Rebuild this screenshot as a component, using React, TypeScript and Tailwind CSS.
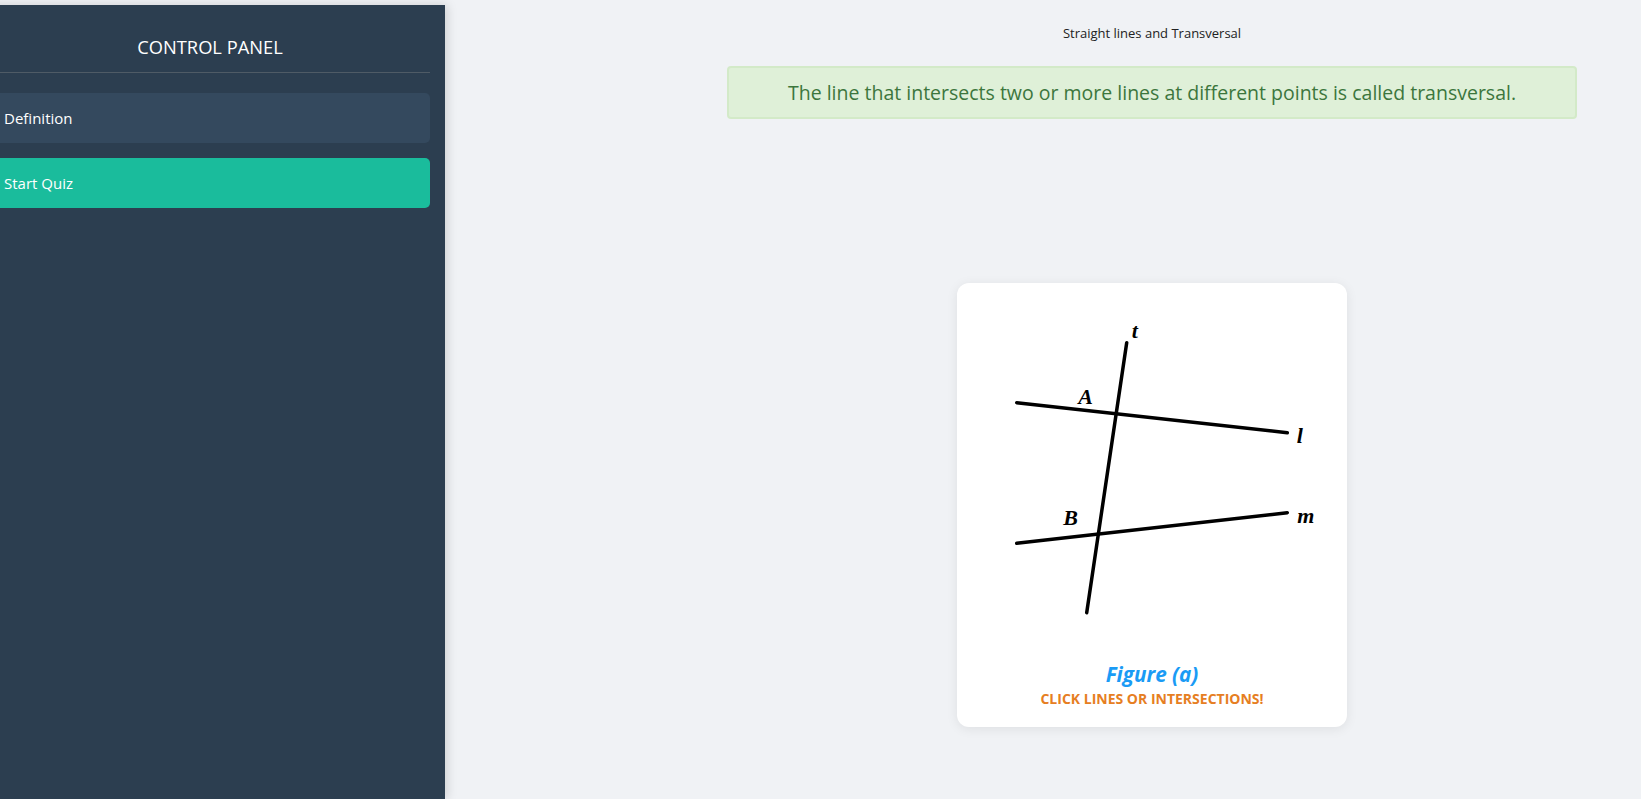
import React from "react";

export default function App() {
  const font = { fontFamily: '"Open Sans", "Noto Sans", sans-serif' };
  return (
    <div className="flex h-[799px] w-full overflow-hidden bg-[#f0f2f5]" style={font}>
      <aside className="mt-[5px] ml-[-25px] flex h-[794px] w-[470px] shrink-0 flex-col bg-[#2c3e50] px-[15px] shadow-[2px_0_10px_rgba(0,0,0,0.15)]">
        <div className="flex h-[68px] items-center justify-center border-b border-[#4f5b66] pt-[17px] text-[18.3px] text-white">
          CONTROL PANEL
        </div>
        <button className="mt-[20px] flex h-[50px] w-full items-center rounded-[5px] bg-[#34495e] px-[14px] text-left text-[15px] text-white">
          Definition
        </button>
        <button className="mt-[15px] flex h-[50px] w-full items-center rounded-[5px] bg-[#1abc9c] px-[14px] text-left text-[15px] text-white">
          Start Quiz
        </button>
      </aside>
      <main className="flex-1">
        <div className="ml-[282px] flex w-[850px] flex-col items-center">
          <div className="mt-[24px] h-[18px] text-[13px] leading-[18px] text-[#222]">Straight lines and Transversal</div>
          <div className="mt-[24px] flex h-[53px] w-[850px] items-center justify-center rounded-[4px] border-2 border-[#d3eac8] bg-[#dff0d8] text-[19.5px] text-[#3c763d]">
            The line that intersects two or more lines at different points is called transversal.
          </div>
          <div className="mt-[164px] flex h-[444px] w-[390px] flex-col items-center rounded-xl bg-white shadow-[0_2px_12px_rgba(0,0,0,0.08)]">
            <svg width="390" height="377" viewBox="0 0 390 377" className="block">
              <g stroke="#000" strokeWidth="3.5" strokeLinecap="round">
                <line x1="169.7" y1="59.7" x2="129.7" y2="329.7" />
                <line x1="59.7" y1="119.7" x2="330.3" y2="149.7" />
                <line x1="59.7" y1="260.3" x2="330.3" y2="229.7" />
              </g>
              <g fontFamily='"Liberation Serif", "Times New Roman", serif' fontStyle="italic" fontWeight="bold" fontSize="22" fill="#000">
                <text x="174.7" y="55">t</text>
                <text x="339.7" y="160">l</text>
                <text x="121.3" y="121">A</text>
                <text x="340.3" y="240">m</text>
                <text x="106.3" y="242">B</text>
              </g>
            </svg>
            <div className="text-[20.7px] font-bold italic leading-[28px] text-[#1a9bf5]">Figure (a)</div>
            <div className="mt-[2px] text-[14px] font-bold leading-[18px] text-[#e67e22]">CLICK LINES OR INTERSECTIONS!</div>
          </div>
        </div>
      </main>
    </div>
  );
}
